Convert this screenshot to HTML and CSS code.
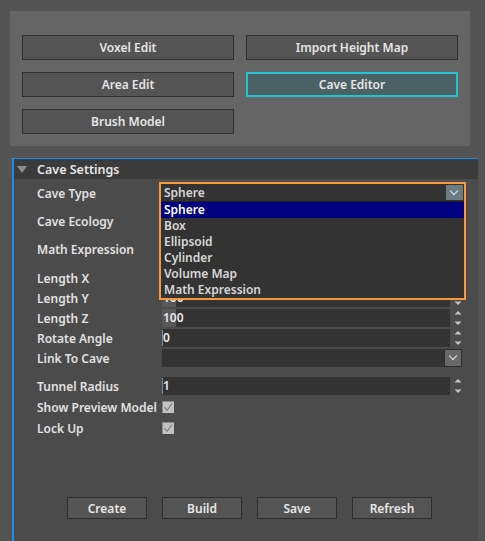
FILE: index.html
```html
<!DOCTYPE html>
<html lang="en">
<head>
    <meta charset="UTF-8">
    <title>Cave Editor</title>
    <link rel="stylesheet" href="styles.css">
</head>
<body>
    <div class="tools">
        <button class="tool">Voxel Edit</button>
        <button class="tool">Import Height Map</button>
        <button class="tool">Area Edit</button>
        <button class="tool active">Cave Editor</button>
        <button class="tool">Brush Model</button>
    </div>

    <div class="settings">
        <div class="header"><span class="arrow"></span>Cave Settings</div>

        <div class="form">
            <div class="row tall">
                <label>Cave Type</label>
                <div class="combo"><span>Sphere</span><span class="drop"></span></div>
            </div>
            <div class="row tall">
                <label>Cave Ecology</label>
                <div class="combo"><span></span><span class="drop"></span></div>
            </div>
            <div class="row tall">
                <label>Math Expression</label>
                <div class="field"></div>
            </div>

            <div class="row first">
                <label>Length X</label>
                <div class="field"><span class="fill"></span><span class="val">100</span></div>
                <span class="spin"><svg width="8" height="14" viewBox="0 0 8 14"><path d="M4 0 7.5 3.5H0.5Z" fill="#c4c4c4"/><path d="M0.5 10.5H7.5L4 14Z" fill="#c4c4c4"/></svg></span>
            </div>
            <div class="row">
                <label>Length Y</label>
                <div class="field"><span class="fill"></span><span class="val">100</span></div>
                <span class="spin"><svg width="8" height="14" viewBox="0 0 8 14"><path d="M4 0 7.5 3.5H0.5Z" fill="#c4c4c4"/><path d="M0.5 10.5H7.5L4 14Z" fill="#c4c4c4"/></svg></span>
            </div>
            <div class="row">
                <label>Length Z</label>
                <div class="field"><span class="fill"></span><span class="val">100</span></div>
                <span class="spin"><svg width="8" height="14" viewBox="0 0 8 14"><path d="M4 0 7.5 3.5H0.5Z" fill="#c4c4c4"/><path d="M0.5 10.5H7.5L4 14Z" fill="#c4c4c4"/></svg></span>
            </div>
            <div class="row">
                <label>Rotate Angle</label>
                <div class="field"><span class="caret"></span><span class="val">0</span></div>
                <span class="spin"><svg width="8" height="14" viewBox="0 0 8 14"><path d="M4 0 7.5 3.5H0.5Z" fill="#c4c4c4"/><path d="M0.5 10.5H7.5L4 14Z" fill="#c4c4c4"/></svg></span>
            </div>
            <div class="row">
                <label>Link To Cave</label>
                <div class="combo"><span></span><span class="drop boxed"></span></div>
            </div>

            <div class="row gap">
                <label>Tunnel Radius</label>
                <div class="field"><span class="caret"></span><span class="val">1</span></div>
                <span class="spin"><svg width="8" height="14" viewBox="0 0 8 14"><path d="M4 0 7.5 3.5H0.5Z" fill="#c4c4c4"/><path d="M0.5 10.5H7.5L4 14Z" fill="#c4c4c4"/></svg></span>
            </div>
            <div class="row check">
                <label>Show Preview Model</label>
                <span class="box"><svg width="12" height="12" viewBox="0 0 12 12"><path d="M2.5 6 5 9.5 10 2.5" fill="none" stroke="#6a6a6a" stroke-width="1"/></svg></span>
            </div>
            <div class="row check">
                <label>Lock Up</label>
                <span class="box"><svg width="12" height="12" viewBox="0 0 12 12"><path d="M2.5 6 5 9.5 10 2.5" fill="none" stroke="#6a6a6a" stroke-width="1"/></svg></span>
            </div>
        </div>

        <div class="actions">
            <button class="act">Create</button>
            <button class="act">Build</button>
            <button class="act">Save</button>
            <button class="act">Refresh</button>
        </div>

        <!-- open dropdown for Cave Type -->
        <div class="popup">
            <div class="popup-head"><span>Sphere</span><span class="drop blue"></span></div>
            <ul class="list">
                <li class="selected">Sphere</li>
                <li>Box</li>
                <li>Ellipsoid</li>
                <li>Cylinder</li>
                <li>Volume Map</li>
                <li>Math Expression</li>
            </ul>
        </div>
    </div>
</body>
</html>
```

FILE: styles.css
```css
body {
    margin: 0;
    background-color: #535353;
    font-family: "Noto Sans", sans-serif;
    font-size: 12px;
    font-weight: 600;
    color: #e2e2e2;
    height: 541px;
    overflow: hidden;
}

button {
    font-family: inherit;
    font-size: 12px;
    font-weight: 600;
    color: #e6e6e6;
    padding: 0;
    cursor: pointer;
}

.tools {
    margin: 11px 0 0 10px;
    width: 460px;
    height: 135px;
    box-sizing: border-box;
    padding: 24px 12px 12px 12px;
    background-color: #656565;
    display: grid;
    grid-template-columns: 212px 212px;
    grid-auto-rows: 25px;
    column-gap: 12px;
    row-gap: 12px;
}

.tool {
    background-color: #545454;
    border: 1px solid #303030;
}

.tool.active {
    background-color: #4b6164;
    border: 2px solid #22c3d3;
}

.settings {
    position: relative;
    margin: 12px 0 0 12px;
    width: 466px;
    height: 400px;
    box-sizing: border-box;
    background-color: #4b4b4b;
    border-top: 1px solid #1a8cec;
    border-left: 2px solid #1a8cec;
}

.header {
    height: 20px;
    line-height: 19px;
    background-color: #3b3b3b;
    padding-left: 3px;
    font-size: 12.5px;
    color: #e6e6e6;
    display: flex;
    align-items: center;
}

.arrow {
    width: 0;
    height: 0;
    border-left: 5px solid transparent;
    border-right: 5px solid transparent;
    border-top: 7px solid #8c8c8c;
    margin-right: 10px;
}

.form {
    padding-left: 23px;
}

.row {
    display: flex;
    align-items: center;
    height: 18px;
    margin-bottom: 2px;
}

.row label {
    width: 125px;
    flex: none;
    white-space: nowrap;
}

.row.tall {
    height: 28px;
    margin-bottom: 0;
}

.row.first {
    margin-top: 6px;
}

.row.gap {
    margin-top: 10px;
}

.row.check {
    height: 20px;
    margin-bottom: 1px;
}

.field {
    position: relative;
    width: 288px;
    height: 18px;
    line-height: 18px;
    background-color: #333333;
    color: #eaeaea;
    padding-left: 1px;
    box-sizing: border-box;
}

.fill {
    position: absolute;
    left: 0;
    top: 0;
    width: 14px;
    height: 18px;
    background-color: #585858;
}

.val {
    position: relative;
}

.caret {
    position: absolute;
    left: 0;
    top: 1px;
    width: 1px;
    height: 16px;
    background-color: #7a8a9a;
}

.spin {
    margin-left: 4px;
    display: flex;
}

.combo {
    width: 300px;
    height: 18px;
    background-color: #333333;
    display: flex;
    align-items: center;
    justify-content: space-between;
    padding-left: 2px;
    box-sizing: border-box;
}

.drop {
    width: 17px;
    height: 16px;
    box-sizing: border-box;
    background-color: #636363;
    position: relative;
}

.drop::after {
    content: "";
    position: absolute;
    left: 5px;
    top: 3px;
    width: 5px;
    height: 5px;
    border-right: 1.5px solid #e8e8e8;
    border-bottom: 1.5px solid #e8e8e8;
    transform: rotate(45deg);
}

.drop.boxed {
    height: 18px;
    width: 18px;
    border: 1px solid #2d2d2d;
    background-color: #686868;
}

.drop.blue {
    height: 15px;
    background-color: #6b7c82;
}

.box {
    width: 12px;
    height: 12px;
    background-color: #c2c2c2;
    border-top: 1px solid #8a8a8a;
    border-left: 1px solid #8a8a8a;
    box-sizing: border-box;
    display: flex;
}

.box svg {
    margin: -1px 0 0 -1px;
}

.actions {
    margin-top: 59px;
    padding-left: 53px;
    display: flex;
    gap: 15px;
}

.act {
    width: 80px;
    height: 22px;
    background-color: #545454;
    border: 1px solid #2e2e2e;
}

.popup {
    position: absolute;
    left: 145px;
    top: 23px;
    width: 307px;
    height: 118px;
    box-sizing: border-box;
    border: 2px solid #f7983a;
    background-color: #333333;
}

.popup-head {
    height: 17px;
    display: flex;
    justify-content: space-between;
    align-items: center;
    padding-left: 3px;
    padding-right: 1px;
    color: #d6d6d6;
    border-bottom: 1px solid #1e1e1e;
}

.list {
    list-style: none;
    margin: 0;
    padding: 0;
}

.list li {
    height: 16px;
    line-height: 16px;
    padding-left: 3px;
    color: #d8d8d8;
}

.list li.selected {
    background-color: #000080;
    color: #ffffff;
}
```
